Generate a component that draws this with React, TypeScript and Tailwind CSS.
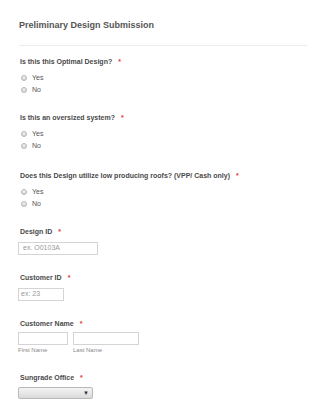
const font = { fontFamily: '"Liberation Sans", Arial, sans-serif' };

function Label({ text, className = "" }: { text: string; className?: string }) {
  return (
    <div className={`pl-[2px] text-[7px] font-bold leading-[10px] text-[#4a4a4a] ${className}`}>
      {text}
      <span className="ml-[6px] text-[#e53935]">*</span>
    </div>
  );
}

function Radio({ label }: { label: string }) {
  return (
    <div className="flex h-[12px] items-center pl-[3px]">
      <span className="h-[6px] w-[6px] rounded-full border border-[#b5b5b5] bg-gradient-to-b from-[#f2f2f2] to-[#d6d6d6]" />
      <span className="ml-[5px] text-[7px] leading-[12px] text-[#555]">{label}</span>
    </div>
  );
}

function YesNo({ q, className }: { q: string; className: string }) {
  return (
    <div className={className}>
      <Label text={q} />
      <div className="mt-[5px]">
        <Radio label="Yes" />
        <Radio label="No" />
      </div>
    </div>
  );
}

export default function App() {
  return (
    <div className="min-h-[400px] bg-white px-[18px] pt-[19px]" style={font}>
      <h1 className="pl-[1px] text-[9px] font-bold leading-[12px] text-[#555]">
        Preliminary Design Submission
      </h1>
      <div className="ml-[1px] mt-[14px] h-px bg-[#ececec]" />

      <YesNo q="Is this this Optimal Design?" className="mt-[11px]" />
      <YesNo q="Is this an oversized system?" className="mt-[17px]" />
      <YesNo q="Does this Design utilize low producing roofs? (VPP/ Cash only)" className="mt-[19px]" />

      <div className="mt-[17px]">
        <Label text="Design ID" />
        <div className="mt-[5px] flex h-[13px] w-[80px] items-center border border-[#d4d4d4] px-[4px] text-[7px] text-[#999]">
          ex. O0103A
        </div>
      </div>

      <div className="mt-[18px]">
        <Label text="Customer ID" />
        <div className="mt-[5px] flex h-[13px] w-[46px] items-center border border-[#d4d4d4] px-[2px] text-[7px] text-[#999]">
          ex: 23
        </div>
      </div>

      <div className="mt-[18px]">
        <Label text="Customer Name" />
        <div className="mt-[3px] flex gap-[5px]">
          <div>
            <div className="h-[13px] w-[50px] border border-[#d4d4d4]" />
            <div className="mt-[1px] text-[6px] leading-[8px] text-[#888]">First Name</div>
          </div>
          <div>
            <div className="h-[13px] w-[66px] border border-[#d4d4d4]" />
            <div className="mt-[1px] text-[6px] leading-[8px] text-[#888]">Last Name</div>
          </div>
        </div>
      </div>

      <div className="mt-[19px]">
        <Label text="Sungrade Office" />
        <div className="mt-[4px] flex h-[12px] w-[75px] items-center justify-end rounded-[2px] border border-[#b9b9b9] bg-gradient-to-b from-[#f4f4f4] to-[#dadada] pr-[3px] text-[6px] text-[#333]">
          ▼
        </div>
      </div>
    </div>
  );
}
